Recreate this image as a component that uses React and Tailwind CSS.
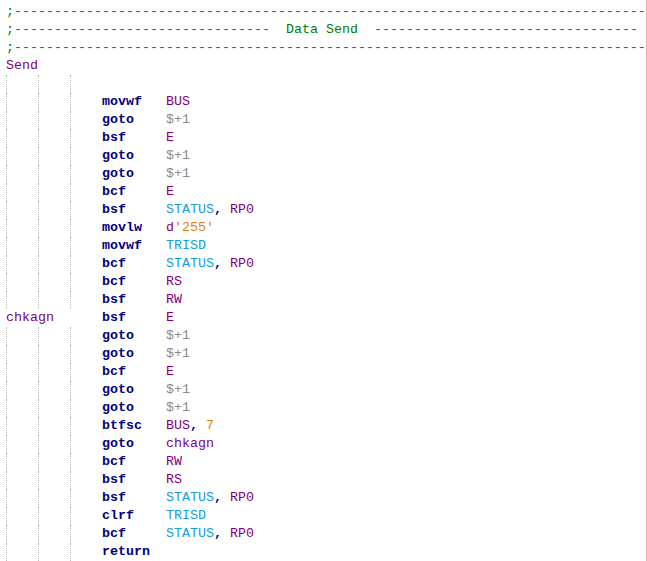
import React from "react";

const C = {
  ins: "text-[#000080] font-bold",
  id: "text-[#800080]",
  reg: "text-[#10a0e0]",
  num: "text-[#e08010]",
  gray: "text-[#8c8c8c]",
  op: "text-[#000080] font-bold",
};

const code = [
  ["movwf", [["BUS", C.id]]],
  ["goto", [["$+1", C.gray]]],
  ["bsf", [["E", C.id]]],
  ["goto", [["$+1", C.gray]]],
  ["goto", [["$+1", C.gray]]],
  ["bcf", [["E", C.id]]],
  ["bsf", [["STATUS", C.reg], [",", C.op], [" RP0", C.id]]],
  ["movlw", [["d", C.id], ["'255'", C.num]]],
  ["movwf", [["TRISD", C.reg]]],
  ["bcf", [["STATUS", C.reg], [",", C.op], [" RP0", C.id]]],
  ["bcf", [["RS", C.id]]],
  ["bsf", [["RW", C.id]]],
  ["bsf", [["E", C.id]], "chkagn"],
  ["goto", [["$+1", C.gray]]],
  ["goto", [["$+1", C.gray]]],
  ["bcf", [["E", C.id]]],
  ["goto", [["$+1", C.gray]]],
  ["goto", [["$+1", C.gray]]],
  ["btfsc", [["BUS", C.id], [",", C.op], [" 7", C.num]]],
  ["goto", [["chkagn", C.id]]],
  ["bcf", [["RW", C.id]]],
  ["bsf", [["RS", C.id]]],
  ["bsf", [["STATUS", C.reg], [",", C.op], [" RP0", C.id]]],
  ["clrf", [["TRISD", C.reg]]],
  ["bcf", [["STATUS", C.reg], [",", C.op], [" RP0", C.id]]],
  ["return", []],
];

function Guides() {
  return (
    <div className="flex h-full">
      <div className="w-[32px] h-full border-l border-dotted border-[#b8b8b8]" />
      <div className="w-[32px] h-full border-l border-dotted border-[#b8b8b8]" />
      <div className="w-[32px] h-full border-l border-dotted border-[#b8b8b8]" />
    </div>
  );
}

const dash = (n) => "-".repeat(n);

export default function App() {
  return (
    <div
      className="w-[647px] h-[561px] bg-white border-r border-[#ffa4a4] overflow-hidden pt-[3px] text-[13.33px] leading-[18px] whitespace-pre"
      style={{ fontFamily: '"Liberation Mono", "Courier New", monospace' }}
    >
      <div className="h-[18px] pl-[6px] text-[#008000]">;{dash(79)}</div>
      <div className="h-[18px] pl-[6px] text-[#008000]">
        ;{dash(32)}  Data Send  {dash(33)}
      </div>
      <div className="h-[18px] pl-[6px] text-[#008000]">;{dash(79)}</div>
      <div className="h-[18px] pl-[6px] text-[#800080]">Send</div>
      <div className="h-[18px] pl-[6px]">
        <Guides />
      </div>
      {code.map(([ins, ops, label], i) => (
        <div key={i} className="h-[18px] pl-[6px] flex">
          {label ? (
            <div className="w-[96px] text-[#800080]">{label}</div>
          ) : (
            <div className="w-[96px] h-full">
              <Guides />
            </div>
          )}
          <div className={`w-[64px] ${C.ins}`}>{ins}</div>
          <div>
            {ops.map(([t, c], j) => (
              <span key={j} className={c}>
                {t}
              </span>
            ))}
          </div>
        </div>
      ))}
    </div>
  );
}
